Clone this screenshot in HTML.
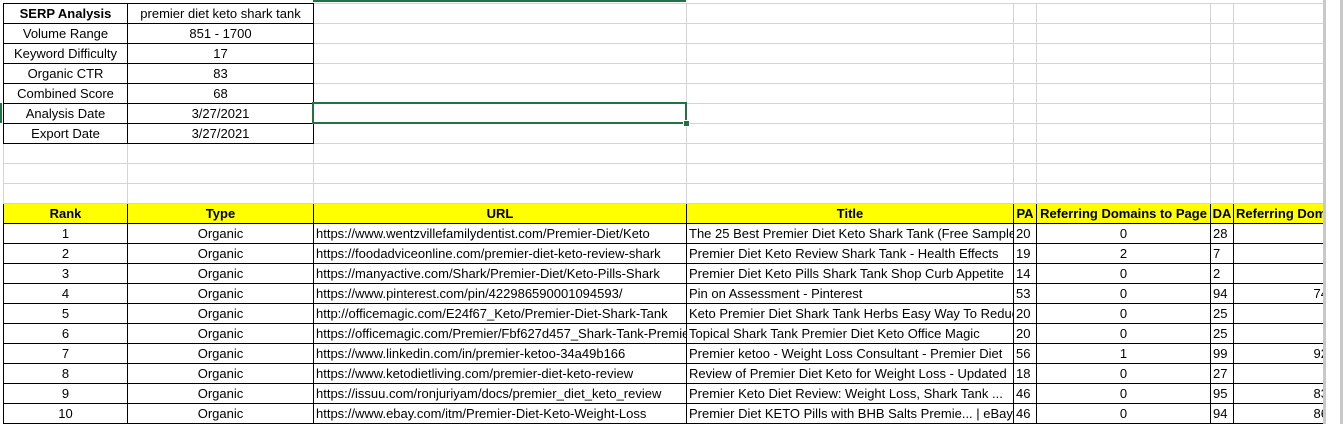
<!DOCTYPE html>
<html><head><style>
html,body{margin:0;padding:0;background:#fff;width:1343px;height:424px;overflow:hidden;position:relative}
table{position:absolute;left:3px;top:3px;width:1320px;border-collapse:collapse;table-layout:fixed;font-family:"Liberation Sans",sans-serif;font-size:13px;color:#000}
td{height:19px;padding:0 2px;border:1px solid #d4d4d4;white-space:nowrap;overflow:hidden;text-align:center;line-height:19px;vertical-align:middle}
td.b{border:1px solid #000}
td.l{text-align:left}
td.r{text-align:right;padding-right:0}
tr.h td{background:#ffff00;font-weight:bold;border:1px solid #000}
.bold{font-weight:bold}
.cut{display:inline-block;margin-right:-5px}
</style></head><body>
<div style="position:absolute;left:313px;top:0;width:373px;height:2px;background:#217346"></div>
<div style="position:absolute;left:0;top:103px;width:2px;height:20px;background:#217346"></div>
<table>
<colgroup><col style="width:124px"><col style="width:186px"><col style="width:373px"><col style="width:327px"><col style="width:23px"><col style="width:174px"><col style="width:23px"><col style="width:90px"></colgroup>
<tr><td class="b bold">SERP Analysis</td><td class="b">premier diet keto shark tank</td><td></td><td></td><td></td><td></td><td></td><td></td></tr>
<tr><td class="b">Volume Range</td><td class="b">851 - 1700</td><td></td><td></td><td></td><td></td><td></td><td></td></tr>
<tr><td class="b">Keyword Difficulty</td><td class="b">17</td><td></td><td></td><td></td><td></td><td></td><td></td></tr>
<tr><td class="b">Organic CTR</td><td class="b">83</td><td></td><td></td><td></td><td></td><td></td><td></td></tr>
<tr><td class="b">Combined Score</td><td class="b">68</td><td></td><td></td><td></td><td></td><td></td><td></td></tr>
<tr><td class="b">Analysis Date</td><td class="b">3/27/2021</td><td></td><td></td><td></td><td></td><td></td><td></td></tr>
<tr><td class="b">Export Date</td><td class="b">3/27/2021</td><td></td><td></td><td></td><td></td><td></td><td></td></tr>
<tr><td></td><td></td><td></td><td></td><td></td><td></td><td></td><td></td></tr>
<tr><td></td><td></td><td></td><td></td><td></td><td></td><td></td><td></td></tr>
<tr><td></td><td></td><td></td><td></td><td></td><td></td><td></td><td></td></tr>
<tr class="h"><td>Rank</td><td>Type</td><td>URL</td><td>Title</td><td style="padding:0">PA</td><td>Referring Domains to Page</td><td style="padding:0">DA</td><td class="l">Referring Domains</td></tr>
<tr><td class="b">1</td><td class="b">Organic</td><td class="b l">https://www.wentzvillefamilydentist.com/Premier-Diet/Keto</td><td class="b l">The 25 Best Premier Diet Keto Shark Tank (Free Sample)</td><td class="b l">20</td><td class="b">0</td><td class="b l">28</td><td class="b r"></td></tr>
<tr><td class="b">2</td><td class="b">Organic</td><td class="b l">https://foodadviceonline.com/premier-diet-keto-review-shark</td><td class="b l">Premier Diet Keto Review Shark Tank - Health Effects</td><td class="b l">19</td><td class="b">2</td><td class="b l">7</td><td class="b r"></td></tr>
<tr><td class="b">3</td><td class="b">Organic</td><td class="b l">https://manyactive.com/Shark/Premier-Diet/Keto-Pills-Shark</td><td class="b l">Premier Diet Keto Pills Shark Tank Shop Curb Appetite</td><td class="b l">14</td><td class="b">0</td><td class="b l">2</td><td class="b r"></td></tr>
<tr><td class="b">4</td><td class="b">Organic</td><td class="b l">https://www.pinterest.com/pin/422986590001094593/</td><td class="b l">Pin on Assessment - Pinterest</td><td class="b l">53</td><td class="b">0</td><td class="b l">94</td><td class="b r"><span class="cut">74</span></td></tr>
<tr><td class="b">5</td><td class="b">Organic</td><td class="b l">http://officemagic.com/E24f67_Keto/Premier-Diet-Shark-Tank</td><td class="b l">Keto Premier Diet Shark Tank Herbs Easy Way To Reduce</td><td class="b l">20</td><td class="b">0</td><td class="b l">25</td><td class="b r"></td></tr>
<tr><td class="b">6</td><td class="b">Organic</td><td class="b l">https://officemagic.com/Premier/Fbf627d457_Shark-Tank-Premier</td><td class="b l">Topical Shark Tank Premier Diet Keto Office Magic</td><td class="b l">20</td><td class="b">0</td><td class="b l">25</td><td class="b r"></td></tr>
<tr><td class="b">7</td><td class="b">Organic</td><td class="b l">https://www.linkedin.com/in/premier-ketoo-34a49b166</td><td class="b l">Premier ketoo - Weight Loss Consultant - Premier Diet</td><td class="b l">56</td><td class="b">1</td><td class="b l">99</td><td class="b r"><span class="cut">92</span></td></tr>
<tr><td class="b">8</td><td class="b">Organic</td><td class="b l">https://www.ketodietliving.com/premier-diet-keto-review</td><td class="b l">Review of Premier Diet Keto for Weight Loss - Updated</td><td class="b l">18</td><td class="b">0</td><td class="b l">27</td><td class="b r"></td></tr>
<tr><td class="b">9</td><td class="b">Organic</td><td class="b l">https://issuu.com/ronjuriyam/docs/premier_diet_keto_review</td><td class="b l">Premier Keto Diet Review: Weight Loss, Shark Tank ...</td><td class="b l">46</td><td class="b">0</td><td class="b l">95</td><td class="b r"><span class="cut">83</span></td></tr>
<tr><td class="b">10</td><td class="b">Organic</td><td class="b l">https://www.ebay.com/itm/Premier-Diet-Keto-Weight-Loss</td><td class="b l">Premier Diet KETO Pills with BHB Salts Premie... | eBay</td><td class="b l">46</td><td class="b">0</td><td class="b l">94</td><td class="b r"><span class="cut">86</span></td></tr>
</table>
<div style="position:absolute;left:312px;top:102px;width:375px;height:22px;border:2px solid #217346;box-sizing:border-box"></div>
<div style="position:absolute;left:683px;top:120px;width:5px;height:5px;background:#217346;border:1px solid #fff"></div>
<div style="position:absolute;left:1323px;top:0;width:20px;height:424px;background:#fff;border-left:3px solid #c8c8c8;box-sizing:border-box"></div>
<div style="position:absolute;left:1340px;top:0;width:3px;height:424px;background:#c8c8c8"></div>
</body></html>
